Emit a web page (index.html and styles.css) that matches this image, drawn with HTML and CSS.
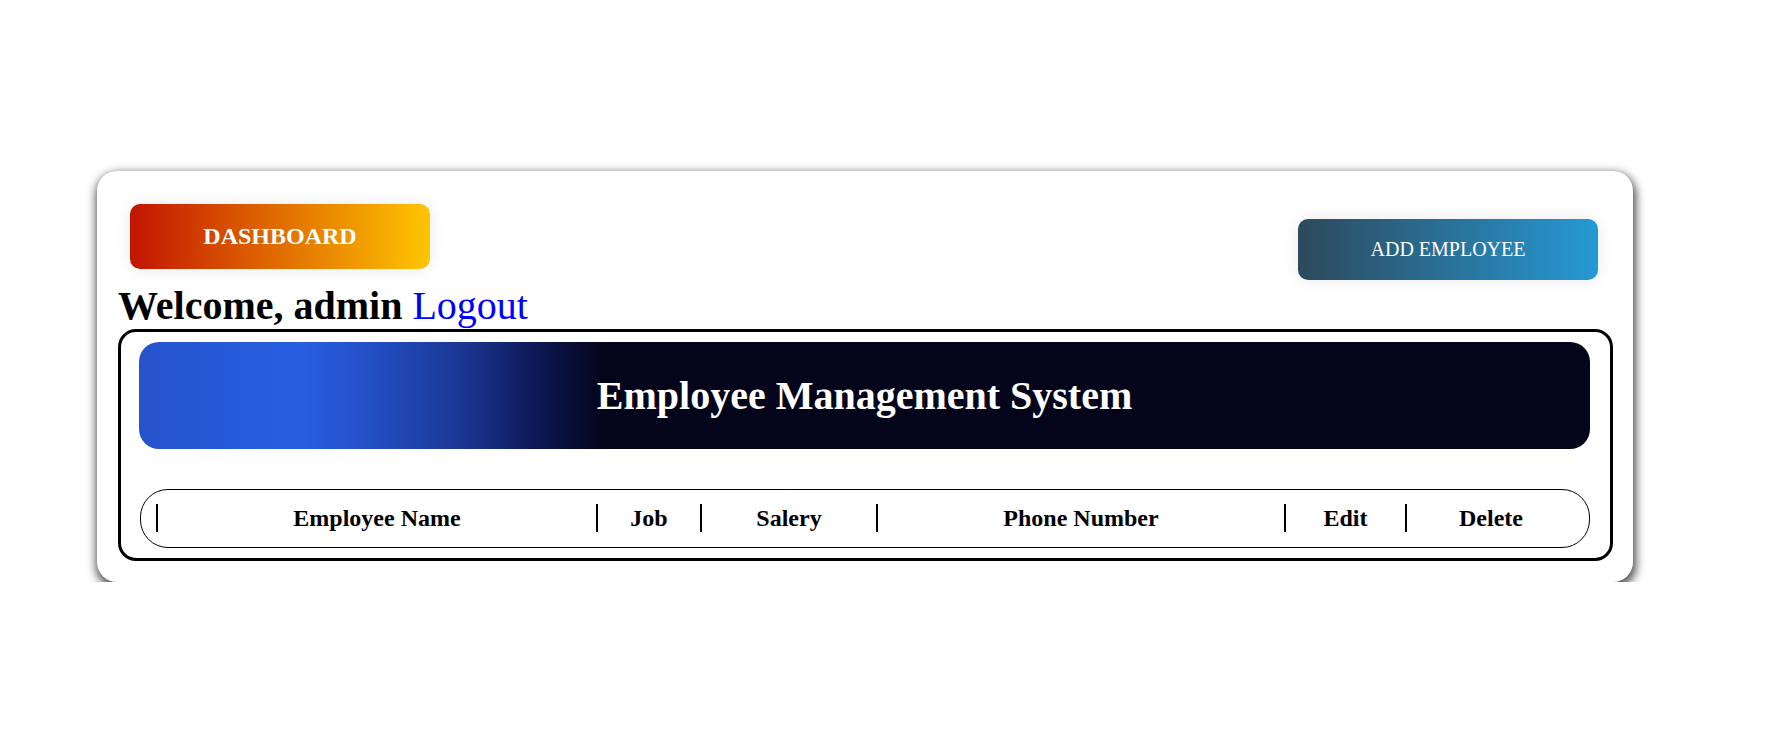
FILE: index.html
```html
<!DOCTYPE html>
<html lang="en">
<head>
<meta charset="utf-8">
<title>Employee Management System</title>
<link rel="stylesheet" href="styles.css">
</head>
<body>
<div class="card">
  <div class="top-bar">
    <a class="btn-dashboard" href="#">DASHBOARD</a>
    <a class="btn-add" href="#">ADD EMPLOYEE</a>
  </div>
  <h2 class="welcome">Welcome, admin <a class="logout" href="#">Logout</a></h2>
  <div class="panel">
    <div class="banner">Employee Management System</div>
    <div class="table-head">
      <div class="th">Employee Name</div>
      <div class="th">Job</div>
      <div class="th">Salery</div>
      <div class="th">Phone Number</div>
      <div class="th">Edit</div>
      <div class="th">Delete</div>
    </div>
  </div>
</div>
</body>
</html>
```

FILE: styles.css
```css
html, body {
  margin: 0;
  padding: 0;
  background: #ffffff;
}

body {
  font-family: "Liberation Serif", "Times New Roman", serif;
  color: #000;
}

.card {
  box-sizing: border-box;
  width: 1536px;
  margin: 171px 0 0 97px;
  padding: 33px 20px 21px 21px;
  background: #fff;
  border-radius: 20px;
  box-shadow: 1px 4px 10px 2px rgba(0, 0, 0, 0.7);
}

.top-bar {
  display: flex;
  justify-content: space-between;
  align-items: flex-start;
  padding: 0 15px 0 12px;
}

.btn-dashboard {
  display: flex;
  align-items: center;
  justify-content: center;
  width: 300px;
  height: 65px;
  border-radius: 10px;
  background: linear-gradient(to right, #c21500, #ffc500);
  color: #fff;
  font-weight: bold;
  font-size: 24px;
  text-decoration: none;
  box-shadow: 0 0 16px rgba(0, 0, 0, 0.09);
}

.btn-add {
  display: flex;
  align-items: center;
  justify-content: center;
  width: 300px;
  height: 61px;
  margin-top: 15px;
  border-radius: 10px;
  background: linear-gradient(to right, #2d495c, #2699d4);
  color: #fff;
  font-size: 20px;
  text-decoration: none;
  box-shadow: 0 0 16px rgba(0, 0, 0, 0.09);
}

.welcome {
  margin: 3px 0 0;
  font-size: 40px;
  font-weight: bold;
  line-height: 46px;
}

.logout {
  color: #0000ff;
  font-weight: normal;
  text-decoration: none;
}

.panel {
  border: 3px solid #000;
  border-radius: 18px;
  padding: 10px 20px 10px 18px;
}

.banner {
  height: 107px;
  display: flex;
  align-items: center;
  justify-content: center;
  border-radius: 20px;
  background: linear-gradient(90deg, #2553cc 0%, #285ee0 11%, #2452cc 15%, #1b3896 22%, #0e1a5a 27%, #04041a 32%, #04041a 100%);
  color: #fff;
  font-size: 40px;
  font-weight: bold;
}

.table-head {
  display: grid;
  grid-template-columns: 440px 104px 176px 408px 121px 1fr;
  margin: 40px 0 0 1px;
  padding: 14px 14px 15px 15px;
  border: 1px solid #000;
  border-radius: 28px;
}

.th {
  border-left: 2px solid #000;
  font-size: 24px;
  font-weight: bold;
  line-height: 28px;
  text-align: center;
}
```
